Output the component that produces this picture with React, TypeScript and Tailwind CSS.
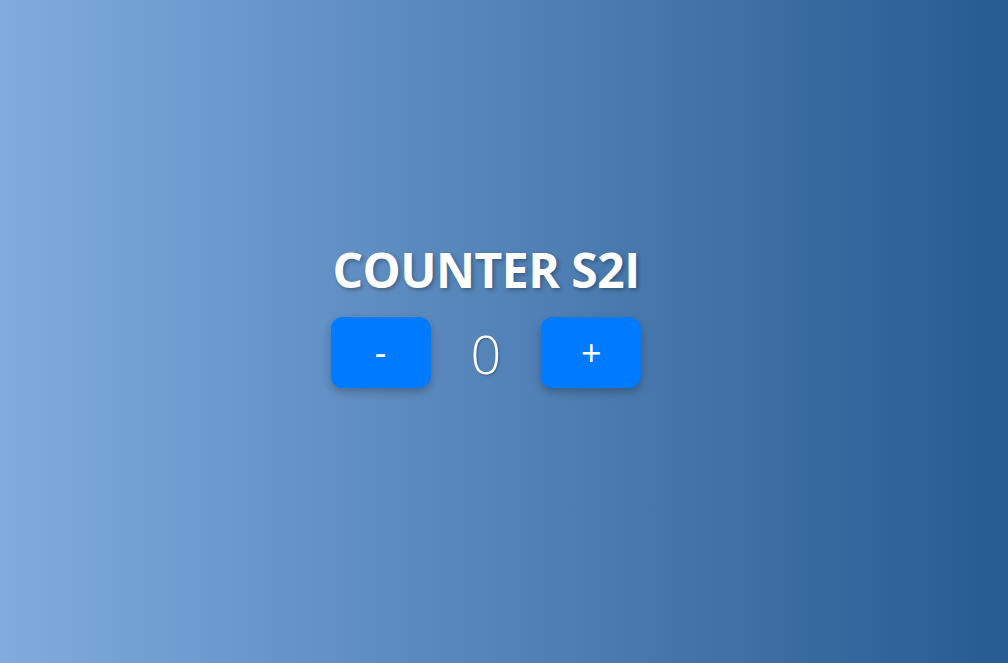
export default function App() {
  return (
    <div className="min-h-screen w-full bg-gradient-to-r from-[#80acdf] to-[#265b91] flex flex-col items-center justify-center font-['Open_Sans',sans-serif] text-white">
      <div className="flex flex-col items-center pb-[34px] pr-[36px]">
        <h1 className="text-[48px] font-bold leading-[1.2] tracking-[-0.5px] [text-shadow:2px_2px_4px_rgba(0,0,0,0.3)]">
          COUNTER S2I
        </h1>
        <div className="mt-[19px] flex items-center">
          <button className="w-[100px] h-[71px] rounded-[12px] bg-[#007bff] text-[36px] leading-none shadow-[0_4px_8px_rgba(0,0,0,0.25)]">
            -
          </button>
          <span className="mx-[40px] text-[54px] font-light leading-none [text-shadow:1px_1px_2px_rgba(0,0,0,0.3)]">
            0
          </span>
          <button className="w-[100px] h-[71px] rounded-[12px] bg-[#007bff] text-[36px] leading-none shadow-[0_4px_8px_rgba(0,0,0,0.25)]">
            +
          </button>
        </div>
      </div>
    </div>
  );
}
